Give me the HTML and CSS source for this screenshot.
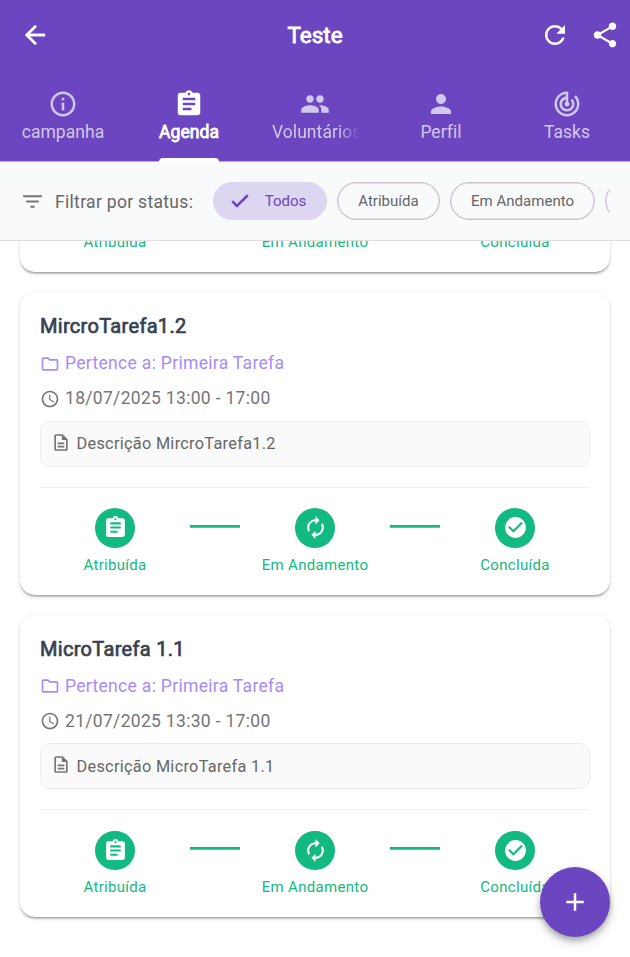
FILE: index.html
```html
<!DOCTYPE html>
<html lang="pt-BR">
<head>
<meta charset="utf-8">
<title>Teste</title>
<link rel="stylesheet" href="styles.css">
</head>
<body>
<svg class="sprite" aria-hidden="true">
  <symbol id="assignment" viewBox="0 0 24 24"><path d="M19 3h-4.18C14.4 1.84 13.3 1 12 1c-1.3 0-2.4.84-2.82 2H5c-1.1 0-2 .9-2 2v14c0 1.1.9 2 2 2h14c1.1 0 2-.9 2-2V5c0-1.1-.9-2-2-2zm-7 0c.55 0 1 .45 1 1s-.45 1-1 1-1-.45-1-1 .45-1 1-1zm2 14H7v-2h7v2zm3-4H7v-2h10v2zm0-4H7V7h10v2z"/></symbol>
  <symbol id="autorenew" viewBox="0 0 24 24"><path d="M12 6v3l4-4-4-4v3c-4.42 0-8 3.58-8 8 0 1.57.46 3.03 1.24 4.26L6.7 14.8c-.45-.83-.7-1.79-.7-2.8 0-3.31 2.69-6 6-6zm6.76 1.74L17.3 9.2c.44.84.7 1.79.7 2.8 0 3.31-2.69 6-6 6v-3l-4 4 4 4v-3c4.42 0 8-3.58 8-8 0-1.57-.46-3.03-1.24-4.26z"/></symbol>
  <symbol id="check-circle" viewBox="0 0 24 24"><path d="M12 2C6.48 2 2 6.48 2 12s4.48 10 10 10 10-4.48 10-10S17.52 2 12 2zm-2 15l-5-5 1.41-1.41L10 14.17l7.59-7.59L19 8l-9 9z"/></symbol>
  <symbol id="folder" viewBox="0 0 24 24"><path d="M20 6h-8l-2-2H4c-1.1 0-1.99.9-1.99 2L2 18c0 1.1.9 2 2 2h16c1.1 0 2-.9 2-2V8c0-1.1-.9-2-2-2zm0 12H4V6h5.17l2 2H20v10z"/></symbol>
  <symbol id="clock" viewBox="0 0 24 24"><path d="M11.99 2C6.47 2 2 6.48 2 12s4.47 10 9.99 10C17.52 22 22 17.52 22 12S17.52 2 11.99 2zM12 20c-4.42 0-8-3.58-8-8s3.58-8 8-8 8 3.58 8 8-3.58 8-8 8zm.5-13H11v6l5.25 3.15.75-1.23-4.5-2.67z"/></symbol>
  <symbol id="description" viewBox="0 0 24 24"><path d="M8 16h8v2H8zm0-4h8v2H8zm6-10H6c-1.1 0-2 .9-2 2v16c0 1.1.89 2 1.99 2H18c1.1 0 2-.9 2-2V8l-6-6zm4 18H6V4h7v5h5v11z"/></symbol>
</svg>

<header class="header">
  <div class="appbar">
    <svg class="icon30 back" viewBox="0 0 24 24"><path d="M20 11H7.83l5.59-5.59L12 4l-8 8 8 8 1.41-1.41L7.83 13H20v-2z"/></svg>
    <h1 class="appbar-title">Teste</h1>
    <div class="actions">
      <svg class="icon30" viewBox="0 0 24 24"><path d="M17.65 6.35C16.2 4.9 14.21 4 12 4c-4.42 0-7.99 3.58-7.99 8s3.57 8 7.99 8c3.73 0 6.84-2.55 7.73-6h-2.08c-.82 2.33-3.04 4-5.65 4-3.31 0-6-2.69-6-6s2.69-6 6-6c1.66 0 3.14.69 4.22 1.78L13 11h7V4l-2.35 2.35z"/></svg>
      <svg class="icon30" viewBox="0 0 24 24"><path d="M18 16.08c-.76 0-1.44.3-1.96.77L8.91 12.7c.05-.23.09-.46.09-.7s-.04-.47-.09-.7l7.05-4.11c.54.5 1.25.81 2.04.81 1.66 0 3-1.34 3-3s-1.34-3-3-3-3 1.34-3 3c0 .24.04.47.09.7L8.04 9.81C7.5 9.31 6.79 9 6 9c-1.66 0-3 1.34-3 3s1.34 3 3 3c.79 0 1.5-.31 2.04-.81l7.12 4.16c-.05.21-.08.43-.08.65 0 1.61 1.31 2.92 2.92 2.92s2.92-1.31 2.92-2.92-1.31-2.92-2.92-2.92z"/></svg>
    </div>
  </div>
  <nav class="tabs">
    <div class="tab">
      <svg class="icon30" viewBox="0 0 24 24"><path d="M11 7h2v2h-2zm0 4h2v6h-2zm1-9C6.48 2 2 6.48 2 12s4.48 10 10 10 10-4.48 10-10S17.52 2 12 2zm0 18c-4.41 0-8-3.59-8-8s3.59-8 8-8 8 3.59 8 8-3.59 8-8 8z"/></svg>
      <span class="tab-label">campanha</span>
    </div>
    <div class="tab active">
      <svg class="icon30"><use href="#assignment"/></svg>
      <span class="tab-label">Agenda</span>
      <i class="indicator"></i>
    </div>
    <div class="tab">
      <svg class="icon30" viewBox="0 0 24 24"><path d="M16 11c1.66 0 2.99-1.34 2.99-3S17.66 5 16 5c-1.66 0-3 1.34-3 3s1.34 3 3 3zm-8 0c1.66 0 2.99-1.34 2.99-3S9.66 5 8 5C6.34 5 5 6.34 5 8s1.34 3 3 3zm0 2c-2.33 0-7 1.17-7 3.5V19h14v-2.5c0-2.33-4.67-3.5-7-3.5zm8 0c-.29 0-.62.02-.97.05 1.16.84 1.97 1.97 1.97 3.45V19h6v-2.5c0-2.33-4.67-3.5-7-3.5z"/></svg>
      <span class="tab-label fade">Voluntários</span>
    </div>
    <div class="tab">
      <svg class="icon30" viewBox="0 0 24 24"><path d="M12 12c2.21 0 4-1.79 4-4s-1.79-4-4-4-4 1.79-4 4 1.79 4 4 4zm0 2c-2.67 0-8 1.34-8 4v2h16v-2c0-2.66-5.33-4-8-4z"/></svg>
      <span class="tab-label">Perfil</span>
    </div>
    <div class="tab">
      <svg class="icon30" viewBox="0 0 24 24"><path d="M19.07 4.93l-1.41 1.41C19.1 7.79 20 9.79 20 12c0 4.42-3.58 8-8 8s-8-3.58-8-8c0-4.08 3.05-7.44 7-7.93v2.02C8.16 6.57 6 9.03 6 12c0 3.31 2.69 6 6 6s6-2.69 6-6c0-1.66-.67-3.16-1.76-4.24l-1.41 1.41C15.55 9.9 16 10.9 16 12c0 2.21-1.79 4-4 4s-4-1.79-4-4c0-1.86 1.28-3.41 3-3.86v2.14c-.6.35-1 .98-1 1.72 0 1.1.9 2 2 2s2-.9 2-2c0-.74-.4-1.38-1-1.72V2h-1C6.48 2 2 6.48 2 12s4.48 10 10 10 10-4.48 10-10c0-2.76-1.12-5.26-2.93-7.07z"/></svg>
      <span class="tab-label">Tasks</span>
    </div>
  </nav>
</header>

<section class="filter">
  <svg class="filter-icon" viewBox="0 0 24 24"><path d="M10 18h4v-2h-4v2zM3 6v2h18V6H3zm3 7h12v-2H6v2z"/></svg>
  <span class="filter-label">Filtrar por status:</span>
  <div class="chips">
    <span class="chip selected"><svg class="chip-check" viewBox="0 0 24 24"><path d="M3.5 12.2l5.2 5.1L20.5 5.7"/></svg>Todos</span>
    <span class="chip chip-assigned">Atribuída</span>
    <span class="chip chip-progress">Em Andamento</span>
    <span class="chip chip-done"></span>
  </div>
</section>

<main class="list">
  <article class="card card-scrolled">
    <div class="steps">
      <div class="step"><span class="dot"><svg><use href="#assignment"/></svg></span>Atribuída</div>
      <i class="line"></i>
      <div class="step"><span class="dot"><svg><use href="#autorenew"/></svg></span>Em Andamento</div>
      <i class="line"></i>
      <div class="step"><span class="dot"><svg><use href="#check-circle"/></svg></span>Concluída</div>
    </div>
  </article>

  <article class="card">
    <h2 class="title">MircroTarefa1.2</h2>
    <p class="row parent"><svg><use href="#folder"/></svg>Pertence a: Primeira Tarefa</p>
    <p class="row time"><svg><use href="#clock"/></svg>18/07/2025 13:00 - 17:00</p>
    <div class="desc"><svg><use href="#description"/></svg>Descrição MircroTarefa1.2</div>
    <div class="steps">
      <div class="step"><span class="dot"><svg><use href="#assignment"/></svg></span>Atribuída</div>
      <i class="line"></i>
      <div class="step"><span class="dot"><svg><use href="#autorenew"/></svg></span>Em Andamento</div>
      <i class="line"></i>
      <div class="step"><span class="dot"><svg><use href="#check-circle"/></svg></span>Concluída</div>
    </div>
  </article>

  <article class="card">
    <h2 class="title">MicroTarefa 1.1</h2>
    <p class="row parent"><svg><use href="#folder"/></svg>Pertence a: Primeira Tarefa</p>
    <p class="row time"><svg><use href="#clock"/></svg>21/07/2025 13:30 - 17:00</p>
    <div class="desc"><svg><use href="#description"/></svg>Descrição MicroTarefa 1.1</div>
    <div class="steps">
      <div class="step"><span class="dot"><svg><use href="#assignment"/></svg></span>Atribuída</div>
      <i class="line"></i>
      <div class="step"><span class="dot"><svg><use href="#autorenew"/></svg></span>Em Andamento</div>
      <i class="line"></i>
      <div class="step"><span class="dot"><svg><use href="#check-circle"/></svg></span>Concluída</div>
    </div>
  </article>
</main>

<button class="fab" aria-label="Adicionar"><svg class="icon30" viewBox="0 0 24 24"><path d="M19 13h-6v6h-2v-6H5v-2h6V5h2v6h6v2z"/></svg></button>
</body>
</html>
```

FILE: styles.css
```css
* { box-sizing: border-box; }
body {
  margin: 0;
  height: 957px;
  overflow: hidden;
  display: flex;
  flex-direction: column;
  background: #fff;
  font-family: Roboto, "Liberation Sans", sans-serif;
  font-weight: 400;
}
svg { fill: currentColor; display: block; flex: none; }
h1, h2, p { margin: 0; font-weight: 400; }
.sprite { position: absolute; width: 0; height: 0; }
.icon30 { width: 30px; height: 30px; }

.header {
  flex: none;
  height: 162px;
  background: #6b46c0;
  color: #fff;
  border-bottom: 1px solid #b9aade;
}
.appbar {
  height: 70px;
  display: grid;
  grid-template-columns: 1fr auto 1fr;
  align-items: center;
  padding: 0 10px;
}
.back { margin-left: 10px; stroke: currentColor; stroke-width: 0.3; }
.appbar-title {
  font-size: 22.5px;
  line-height: 30px;
  -webkit-text-stroke: 0.8px currentColor;
}
.actions { display: flex; gap: 20px; justify-content: flex-end; }
.tabs { display: flex; height: 91px; }
.tab {
  position: relative;
  width: 126px;
  padding: 19px 20px 0;
  display: flex;
  flex-direction: column;
  align-items: center;
  color: #d2c7ec;
}
.tab-label { font-size: 17.5px; line-height: 26px; letter-spacing: 0.06px; white-space: nowrap; }
.fade {
  width: 86px;
  overflow: hidden;
  -webkit-mask-image: linear-gradient(to right, #000 66px, transparent 88px);
  mask-image: linear-gradient(to right, #000 66px, transparent 88px);
}
.active { color: #fff; }
.active .tab-label { -webkit-text-stroke: 0.8px currentColor; }
.indicator {
  position: absolute;
  bottom: -1px;
  width: 60px;
  height: 4px;
  border-radius: 4px 4px 0 0;
  background: #fff;
}

.filter {
  flex: none;
  height: 79px;
  display: flex;
  align-items: center;
  padding: 0 20px;
  background: #f9fafc;
  border-bottom: 1px solid #dedede;
  color: #666;
}
.filter-icon { width: 25px; height: 25px; color: #757575; margin-right: 10px; }
.filter-label { width: 138px; padding-top: 2px; font-size: 17.5px; letter-spacing: 0.31px; white-space: nowrap; }
.chips { flex: 1; min-width: 0; display: flex; gap: 10px; overflow: hidden; margin-left: 20px; }
.chip {
  flex: none;
  display: flex;
  align-items: center;
  justify-content: center;
  height: 38px;
  border: 1px solid #cac4d0;
  border-radius: 19px;
  box-shadow: inset 0 0 0 0.5px #cac4d0;
  font-size: 15px;
  letter-spacing: 0.03px;
  color: #666;
}
.selected {
  width: 114px;
  padding-right: 5px;
  border-color: #ddd6f0;
  box-shadow: none;
  background: #ddd6f0;
  color: #6b46c0;
  gap: 14px;
}
.chip-check { width: 22px; height: 22px; fill: none; stroke: currentColor; stroke-width: 2.8; }
.chip-assigned { width: 103px; }
.chip-progress { width: 145px; }
.chip-done { width: 110px; }

.list { flex: 1; overflow: hidden; padding: 0 20px; }
.card {
  height: 302.5px;
  margin-bottom: 20px;
  padding: 20px;
  border-radius: 15px;
  background: #fff;
  box-shadow: 0 2px 2px -1px rgba(0,0,0,.2), 0 1.25px 1.5px rgba(0,0,0,.12), 0 1.25px 4px rgba(0,0,0,.12);
}
.card-scrolled {
  margin-top: -271.5px;
  padding-bottom: 21px;
  display: flex;
  flex-direction: column;
  justify-content: flex-end;
}
.title { font-size: 20px; line-height: 28px; color: #374151; letter-spacing: 0.31px; -webkit-text-stroke: 0.7px currentColor; }
.row { display: flex; align-items: center; gap: 5px; font-size: 17.5px; line-height: 25px; letter-spacing: 0.31px; }
.row svg { width: 20px; height: 20px; }
.parent { margin-top: 11px; color: #a78bfa; }
.time { margin-top: 10px; color: #757575; }
.desc {
  display: flex;
  align-items: center;
  height: 46px;
  margin-top: 9.5px;
  padding: 0 10.5px;
  gap: 5px;
  border: 1px solid #eee;
  border-radius: 10px;
  background: #fafafa;
  color: #666;
  font-size: 16.25px;
  letter-spacing: 0.31px;
}
.desc svg { width: 20px; height: 20px; margin-left: -0.5px; margin-right: 0.5px; color: #757575; transform: translateY(-1.5px); }
.steps {
  display: flex;
  justify-content: space-between;
  height: 87px;
  margin-top: 20px;
  padding-top: 20.5px;
  border-top: 1px solid #f0f0f0;
}
.step {
  width: 150px;
  display: flex;
  flex-direction: column;
  align-items: center;
  font-size: 15px;
  line-height: 18px;
  letter-spacing: 0.31px;
  white-space: nowrap;
  color: #12b981;
}
.dot {
  display: flex;
  align-items: center;
  justify-content: center;
  width: 40px;
  height: 40px;
  margin-bottom: 7.7px;
  border-radius: 50%;
  background: #12b981;
  color: #fff;
}
.dot svg { width: 25px; height: 25px; }
.line { width: 50px; height: 3px; margin-top: 16.7px; background: linear-gradient(#12b981 2px, #4cca9f 2px); }

.fab {
  position: absolute;
  right: 20px;
  bottom: 20px;
  width: 70px;
  height: 70px;
  padding: 0;
  display: flex;
  align-items: center;
  justify-content: center;
  border: 0;
  border-radius: 50%;
  background: #6b46c0;
  color: #fff;
  box-shadow: 0 4px 6px -1px rgba(0,0,0,.25), 0 6px 12px rgba(0,0,0,.12), 0 1px 10px rgba(0,0,0,.08);
}
```
